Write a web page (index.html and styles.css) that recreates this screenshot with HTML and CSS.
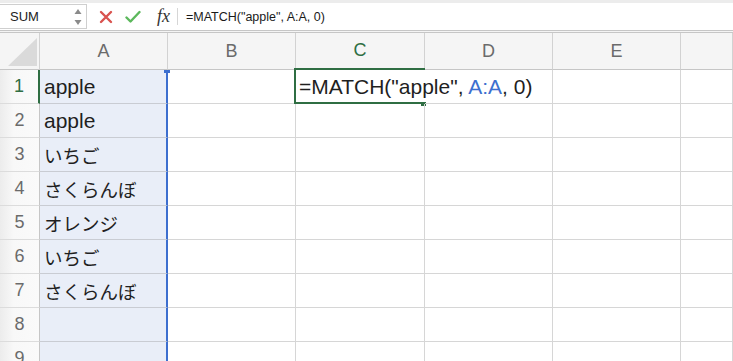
FILE: index.html
```html
<!DOCTYPE html>
<html lang="ja">
<head>
    <meta charset="UTF-8">
    <meta name="viewport" content="width=device-width, initial-scale=1.0">
    <title>MATCH</title>
    <link rel="stylesheet" href="styles.css">
</head>
<body>
    <div class="fbar">
        <div class="namebox">
            <span>SUM</span>
            <svg class="spin" width="8" height="18" viewBox="0 0 8 18">
                <path d="M4 1 L7.5 6 L0.5 6 Z" fill="#8a8a8a"/>
                <path d="M4 17 L7.5 12 L0.5 12 Z" fill="#8a8a8a"/>
            </svg>
        </div>
        <div class="fbtns">
            <svg width="14" height="14" viewBox="0 0 14 14">
                <path d="M2 2 L12 12 M12 2 L2 12" stroke="#d9534f" stroke-width="2.4" stroke-linecap="round"/>
            </svg>
            <svg width="16" height="14" viewBox="0 0 16 14">
                <path d="M1.5 7.5 L5.5 11.5 L14.5 2" stroke="#5cb85c" stroke-width="2.4" fill="none" stroke-linecap="round" stroke-linejoin="round"/>
            </svg>
            <span class="fx">fx</span>
        </div>
        <div class="finput">=MATCH("apple", A:A, 0)</div>
    </div>
    <div class="gap"></div>

    <div class="sheet">
        <div class="row head">
            <div class="corner"><div class="tri"></div></div>
            <div class="colh">A</div>
            <div class="colh">B</div>
            <div class="colh on">C</div>
            <div class="colh">D</div>
            <div class="colh">E</div>
            <div class="colh"></div>
        </div>
        <div class="row">
            <div class="rowh on">1</div>
            <div class="cell sel top">apple</div>
            <div class="cell"></div>
            <div class="cell active"><span class="val">=MATCH("apple", <span class="ref">A:A</span>, 0)</span></div>
            <div class="cell"></div>
            <div class="cell"></div>
            <div class="cell"></div>
        </div>
        <div class="row">
            <div class="rowh">2</div>
            <div class="cell sel">apple</div>
            <div class="cell"></div><div class="cell"></div><div class="cell"></div><div class="cell"></div><div class="cell"></div>
        </div>
        <div class="row">
            <div class="rowh">3</div>
            <div class="cell sel"><span class="ja">いちご</span></div>
            <div class="cell"></div><div class="cell"></div><div class="cell"></div><div class="cell"></div><div class="cell"></div>
        </div>
        <div class="row">
            <div class="rowh">4</div>
            <div class="cell sel"><span class="ja">さくらんぼ</span></div>
            <div class="cell"></div><div class="cell"></div><div class="cell"></div><div class="cell"></div><div class="cell"></div>
        </div>
        <div class="row">
            <div class="rowh">5</div>
            <div class="cell sel"><span class="ja">オレンジ</span></div>
            <div class="cell"></div><div class="cell"></div><div class="cell"></div><div class="cell"></div><div class="cell"></div>
        </div>
        <div class="row">
            <div class="rowh">6</div>
            <div class="cell sel"><span class="ja">いちご</span></div>
            <div class="cell"></div><div class="cell"></div><div class="cell"></div><div class="cell"></div><div class="cell"></div>
        </div>
        <div class="row">
            <div class="rowh">7</div>
            <div class="cell sel"><span class="ja">さくらんぼ</span></div>
            <div class="cell"></div><div class="cell"></div><div class="cell"></div><div class="cell"></div><div class="cell"></div>
        </div>
        <div class="row">
            <div class="rowh">8</div>
            <div class="cell sel"></div>
            <div class="cell"></div><div class="cell"></div><div class="cell"></div><div class="cell"></div><div class="cell"></div>
        </div>
        <div class="row">
            <div class="rowh">9</div>
            <div class="cell sel"></div>
            <div class="cell"></div><div class="cell"></div><div class="cell"></div><div class="cell"></div><div class="cell"></div>
        </div>
    </div>
</body>
</html>
```

FILE: styles.css
```css
*{
    box-sizing: border-box;
}
html, body{
    margin: 0;
    height: 100%;
    overflow: hidden;
    background-color: #fff;
    font-family: "Liberation Sans", "Noto Sans CJK JP", sans-serif;
}
.fbar{
    height: 31px;
    display: flex;
    align-items: center;
    border-top: 3px solid #ececec;
    border-bottom: 1px solid #c6c6c6;
    background-color: #fff;
}
.namebox{
    width: 87px;
    height: 25px;
    display: flex;
    align-items: center;
    justify-content: space-between;
    padding: 0 4px 0 10px;
    border: 1px solid #cfcfcf;
    border-left: 0;
    font-size: 13px;
    color: #222;
}
.fbtns{
    display: flex;
    align-items: center;
    height: 17px;
    padding: 0 0 0 12px;
    border-right: 1px solid #d6d6d6;
}
.fbtns svg{
    margin-right: 12px;
}
.fbtns svg + svg{
    margin-right: 16px;
}
.fx{
    font-family: "Liberation Serif", serif;
    font-style: italic;
    font-size: 18px;
    color: #333;
    margin-right: 7px;
    line-height: 17px;
}
.finput{
    padding-left: 8px;
    font-size: 12.5px;
    color: #1a1a1a;
}
.gap{
    height: 1px;
    background-color: #f4f4f4;
}
.sheet{
    border-top: 1px solid #c6c6c6;
}
.row{
    display: grid;
    grid-template-columns: 40px 128px 128px 129px 128px 128px 1fr;
    height: 34px;
}
.row.head{
    height: 37px;
}
.corner, .colh{
    position: relative;
    background-color: #f5f5f5;
    border-right: 1px solid #d2d2d2;
    border-bottom: 1px solid #c6c6c6;
}
.colh{
    display: flex;
    align-items: center;
    justify-content: center;
    font-size: 18px;
    color: #6b6b6b;
}
.colh.on{
    color: #2f6e43;
    border-bottom: 2px solid #2f6e43;
}
.tri{
    position: absolute;
    right: 2px;
    bottom: 3px;
    width: 0;
    height: 0;
    border-left: 29px solid transparent;
    border-bottom: 28px solid #dadada;
}
.rowh{
    display: flex;
    align-items: center;
    justify-content: center;
    font-size: 18px;
    color: #6b6b6b;
    background: linear-gradient(to right, #ececec, #f8f8f8 35%, #fafafa);
    border-right: 1px solid #c6c6c6;
    border-bottom: 1px solid #dcdcdc;
}
.rowh.on{
    color: #2f6e43;
    border-right: 2px solid #2f6e43;
}
.cell{
    position: relative;
    display: flex;
    align-items: center;
    padding-left: 3px;
    white-space: nowrap;
    font-size: 21px;
    color: #1f1f1f;
    border-right: 1px solid #d6d6d6;
    border-bottom: 1px solid #d6d6d6;
}
.cell.sel{
    padding-left: 4px;
    background-color: #e9eef8;
    border-right: 2px solid #3d6fcf;
    border-bottom-color: #c9ccd3;
}
.cell.top::after{
    content: "";
    position: absolute;
    right: -4px;
    top: 0;
    width: 6px;
    height: 3px;
    background-color: #3d6fcf;
}
.ja{
    font-family: "Noto Sans CJK JP", sans-serif;
    font-size: 18.5px;
}
.cell.active{
    padding-left: 3px;
    border-right-color: transparent;
}
.cell.active::before{
    content: "";
    position: absolute;
    left: -2px;
    top: -2px;
    right: -1px;
    bottom: -1px;
    border: 2px solid #2f6e43;
    border-right: 0;
}
.cell.active::after{
    content: "";
    position: absolute;
    right: -2px;
    bottom: -3px;
    width: 5px;
    height: 4px;
    background-color: #2f6e43;
}
.val{
    position: relative;
}
.ref{
    color: #3d6fcf;
}
```
